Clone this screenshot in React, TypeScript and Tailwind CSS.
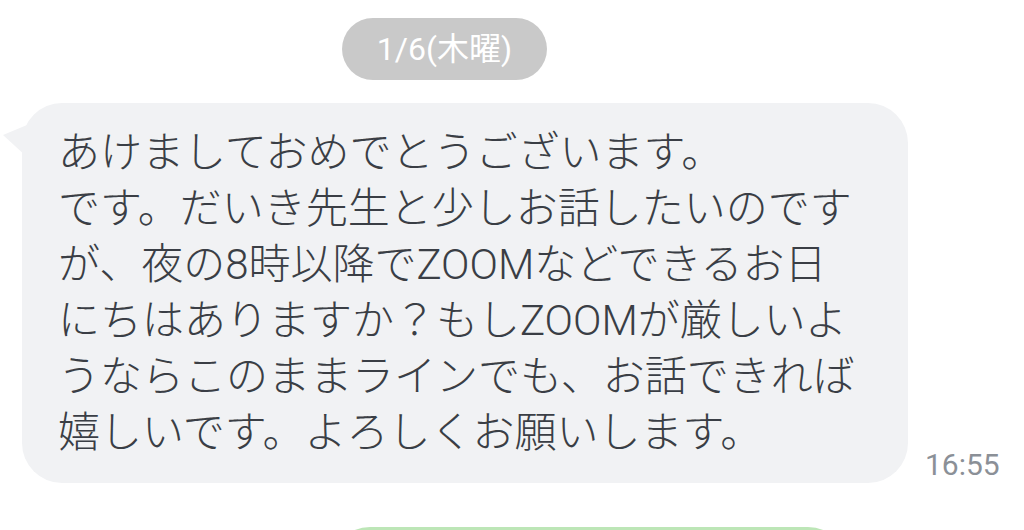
// Chat screen: a date chip, one received message with its time, and the top of a sent bubble.

const lines = [
  "あけましておめでとうございます。",
  "です。だいき先生と少しお話したいのです",
  "が、夜の8時以降でZOOMなどできるお日",
  "にちはありますか？もしZOOMが厳しいよ",
  "うならこのままラインでも、お話できれば",
  "嬉しいです。よろしくお願いします。",
];

export default function App() {
  return (
    <div className="h-[530px] w-[1024px] overflow-hidden bg-white font-['Roboto','Noto_Sans_CJK_JP',sans-serif]">
      {/* date chip */}
      <div className="pt-[18px]">
        <div className="ml-[342px] flex h-[62px] w-[205px] items-center justify-center rounded-full bg-[#c9c9c9] text-[32px] text-white">
          1/6(木曜)
        </div>
      </div>

      {/* received message */}
      <div className="mt-[23px] flex items-end pl-[22px]">
        <div className="relative w-[886px] rounded-[40px] bg-[#f1f2f4] pt-[22px] pb-[22px] pl-[36px] text-[42px] font-light leading-[56px] text-[#3a3e45]">
          <svg
            className="absolute left-[-19px] top-[20px]"
            width="24"
            height="36"
            viewBox="0 0 24 36"
          >
            <path d="M0 12 L24 2 L24 34 Z" fill="#f1f2f4" />
          </svg>
          {lines.map((l) => (
            <div key={l} className="whitespace-nowrap">
              {l}
            </div>
          ))}
        </div>
        <div className="ml-[17px] text-[30px] leading-[36px] text-[#8b9097]">16:55</div>
      </div>

      {/* sent message (cut off) */}
      <div className="mt-[44px] ml-[330px] h-[60px] w-[518px] rounded-t-[40px] bg-[#bde6b7]" />
    </div>
  );
}
